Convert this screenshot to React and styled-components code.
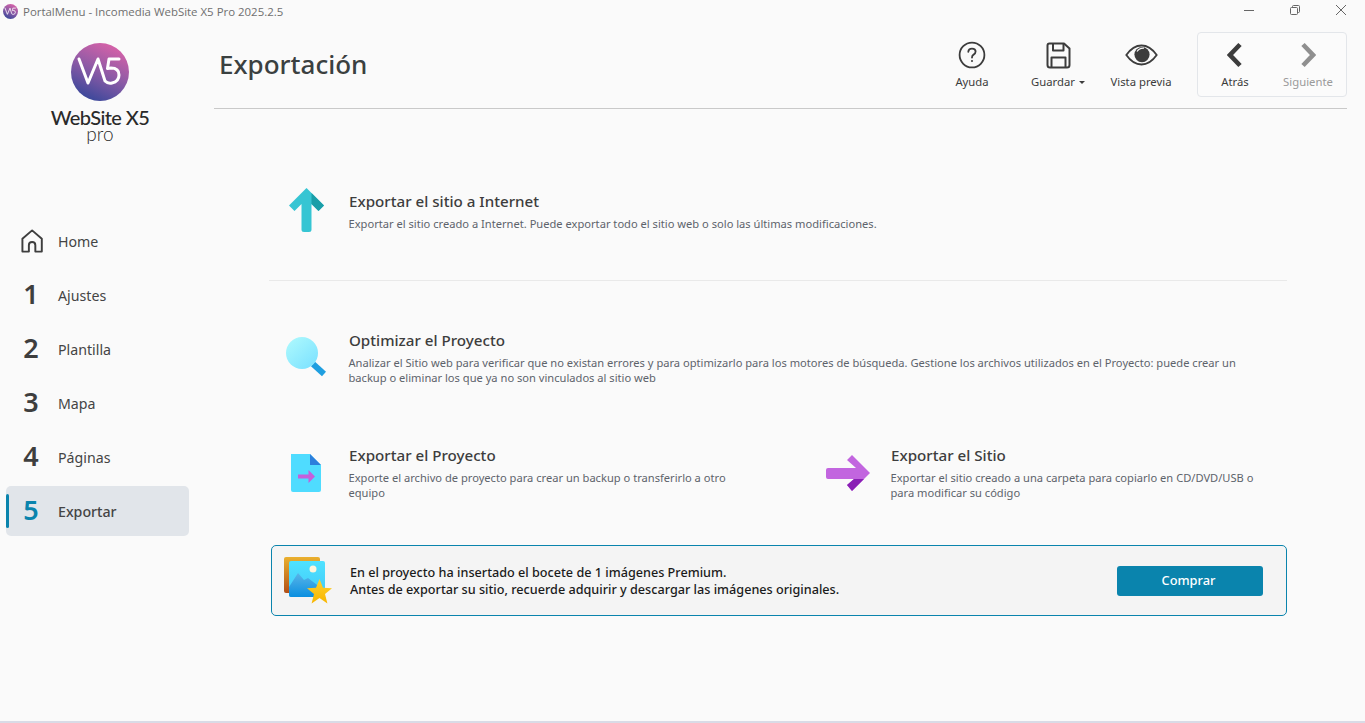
import React from "react"
import styled, { createGlobalStyle } from "styled-components"

const Global = createGlobalStyle`
  html, body {
    margin: 0;
    padding: 0;
    height: 100%;
    overflow: hidden;
    background: #fafafa;
  }
  * {
    box-sizing: border-box;
  }
`

const Window = styled.div`
  background: #fafafa;
  border-bottom: 2px solid #d9dbe6;
  color: #3c3c3c;
  display: flex;
  flex-direction: column;
  font-family: "Noto Sans", "Open Sans", sans-serif;
  height: 723px;
  width: 1365px;
`

const TitleBar = styled.div`
  align-items: center;
  display: flex;
  flex: none;
  height: 24px;
  padding: 0 0 2px 3px;
`

const TitleText = styled.span`
  color: #6f6f6f;
  font-family: "Open Sans", sans-serif;
  font-size: 11.45px;
  margin-left: 5px;
`

const WindowButtons = styled.div`
  align-items: center;
  display: flex;
  gap: 34px;
  margin-left: auto;
  margin-right: 18px;
  margin-top: -2px;
`

const Body = styled.div`
  display: flex;
  flex: 1;
  min-height: 0;
`

const Sidebar = styled.aside`
  display: flex;
  flex: none;
  flex-direction: column;
  padding: 19px 0 0 6px;
  width: 214px;
`

const Brand = styled.div`
  align-items: center;
  display: flex;
  flex-direction: column;
  margin-bottom: 74px;
  width: 188px;
`

const BrandName = styled.div`
  color: #2a2a2a;
  font-family: "Lato", sans-serif;
  font-size: 20px;
  font-weight: 500;
  letter-spacing: -0.6px;
  line-height: 18px;
  margin-top: 7px;
  white-space: nowrap;
`

const BrandPro = styled.div`
  color: #2a2a2a;
  font-family: "Lato", sans-serif;
  font-size: 19px;
  font-weight: 300;
  line-height: 16px;
`

const Nav = styled.nav`
  display: flex;
  flex-direction: column;
  gap: 4px;
  width: 183px;
`

const NavItem = styled.div`
  align-items: center;
  background: ${p => (p.$active ? "#e1e5ea" : "transparent")};
  border-radius: 5px;
  display: flex;
  height: 50px;
  position: relative;

  ${p =>
    p.$active &&
    `&::before {
      background: #0a84ad;
      border-radius: 2px;
      bottom: 8px;
      content: "";
      left: 0;
      position: absolute;
      top: 8px;
      width: 3px;
    }`}
`

const NavMark = styled.div`
  align-items: center;
  color: ${p => (p.$active ? "#0a84ad" : "#3e3e3e")};
  display: flex;
  flex: none;
  font-size: 27px;
  font-weight: 600;
  justify-content: center;
  margin-left: 5px;
  padding-bottom: ${p => (p.$icon ? 0 : 3)}px;
  width: 40px;
`

const NavLabel = styled.span`
  color: #444;
  font-size: 14.2px;
  font-weight: ${p => (p.$active ? 500 : 400)};
  margin-left: 7px;
`

const Main = styled.main`
  display: flex;
  flex: 1;
  flex-direction: column;
  min-width: 0;
`

const Header = styled.header`
  align-items: flex-start;
  border-bottom: 1px solid #c9c9c9;
  display: flex;
  flex: none;
  height: 85px;
  margin-right: 18px;
  padding-top: 8px;
`

const PageTitle = styled.h1`
  color: #3a4040;
  font-size: 26px;
  font-weight: 500;
  line-height: 50px;
  margin: 7px 0 0 5px;
`

const Tools = styled.div`
  display: flex;
  margin-left: auto;
`

const Tool = styled.div`
  align-items: center;
  color: ${p => (p.$muted ? "#9a9a9a" : "#3c3c3c")};
  display: flex;
  flex-direction: column;
  flex: none;
  font-size: 11.3px;
  height: 65px;
  padding-top: ${p => (p.$paged ? 7 : 8)}px;
  width: ${p => p.$w}px;
`

const ToolIcon = styled.div`
  align-items: center;
  display: flex;
  height: 30px;
  justify-content: center;
  margin-bottom: 4px;
`

const Caret = styled.span`
  border-left: 3px solid transparent;
  border-right: 3px solid transparent;
  border-top: 3px solid #3c3c3c;
  display: inline-block;
  margin-left: 4px;
  vertical-align: middle;
`

const Pager = styled.div`
  background: #fbfbfb;
  border: 1px solid #e3e6ea;
  border-radius: 4px;
  display: flex;
  height: 65px;
  margin-left: 9px;
  width: 150px;
`

const Content = styled.div`
  display: flex;
  flex: 1;
  flex-direction: column;
  padding: 0 78px 0 55px;
`

const FirstRow = styled.section`
  border-bottom: 1px solid #e9e9e9;
  display: flex;
  height: 172px;
  padding: 82px 0 0 0;
`

const Row = styled.section`
  display: flex;
  height: ${p => p.$h}px;
  padding-top: ${p => p.$top}px;
`

const Entry = styled.div`
  display: flex;
  flex: ${p => (p.$half ? "none" : "1")};
  width: ${p => (p.$half ? "542px" : "auto")};
`

const EntryIcon = styled.div`
  display: flex;
  flex: none;
  justify-content: center;
  margin-right: 6px;
  margin-top: ${p => p.$top || 0}px;
  width: 74px;
`

const EntryText = styled.div`
  max-width: ${p => p.$max || "none"};
`

const EntryTitle = styled.h2`
  color: #3d3d3d;
  font-size: 15.15px;
  font-weight: 500;
  line-height: 20px;
  margin: 0 0 4.5px 0;
`

const EntryDesc = styled.p`
  color: #5d636b;
  font-size: 11.13px;
  line-height: 15.5px;
  margin: 0 0 0 -0.5px;
`

const Banner = styled.section`
  align-items: center;
  background: #f4f4f4;
  border: 1px solid #0a84ad;
  border-radius: 5px;
  display: flex;
  height: 71px;
  margin-left: 2px;
  padding: 0 23px 0 12px;
`

const BannerText = styled.p`
  color: #1b1b1b;
  font-size: 12.65px;
  font-weight: 500;
  line-height: 17px;
  margin: 0 0 0 18px;
`

const BuyButton = styled.button`
  background: #0a84ad;
  border: none;
  border-radius: 3px;
  color: #fff;
  font-family: inherit;
  font-size: 12.8px;
  font-weight: 500;
  height: 30px;
  margin-left: auto;
  padding: 0 3px 2px 0;
  width: 146px;
`

const LogoMark = ({ size, id }) => (
  <svg width={size} height={size} viewBox="0 0 58 58">
    <defs>
      <linearGradient id={id} x1="0.75" y1="0" x2="0.3" y2="1">
        <stop offset="0" stopColor="#dc62a8" />
        <stop offset="0.5" stopColor="#8e5ba6" />
        <stop offset="1" stopColor="#37479a" />
      </linearGradient>
    </defs>
    <circle cx="29" cy="29" r="29" fill={`url(#${id})`} />
    <path
      d="M8 16 L17 40 L27 16 L34 38 Q37 41 41 40 Q48 38.5 48 32 Q48 25 40 25 L36.5 25.5 L38 16 L48 16"
      fill="none"
      stroke="#fff"
      strokeWidth="3"
      strokeLinecap="round"
      strokeLinejoin="round"
    />
  </svg>
)

const HomeIcon = () => (
  <svg width="24" height="24" viewBox="-2.2 0 26 26" fill="none" stroke="#3e3e3e" strokeWidth="2.1" strokeLinejoin="round">
    <path d="M1.5 24.5 V10.5 L12 1.5 L22.5 10.5 V24.5 H15.5 V17.5 Q15.5 14 12 14 Q8.5 14 8.5 17.5 V24.5 Z" />
  </svg>
)

const HelpIcon = () => (
  <svg width="28" height="28" viewBox="0 0 28 28" fill="none" stroke="#3c3c3c" strokeWidth="1.8">
    <circle cx="14" cy="14" r="12.4" />
    <path d="M10.3 10.8 Q10.5 7.6 14 7.6 Q17.6 7.6 17.6 10.6 Q17.6 12.5 15.6 13.6 Q14 14.5 14 16.6" strokeLinecap="round" />
    <circle cx="14" cy="20" r="0.7" fill="#3c3c3c" strokeWidth="0.8" />
  </svg>
)

const SaveIcon = () => (
  <svg width="25" height="27" viewBox="0 0 25 27" fill="none" stroke="#3c3c3c" strokeWidth="2" strokeLinejoin="round">
    <path d="M3.5 1.5 H18 L23.5 6.5 V23 Q23.5 25.5 21 25.5 H4 Q1.5 25.5 1.5 23 V3.5 Q1.5 1.5 3.5 1.5 Z" />
    <path d="M7 1.5 V8.5 H17.5 V1.5" />
    <path d="M5.5 25.5 V15.5 H19.5 V25.5" />
  </svg>
)

const EyeIcon = () => (
  <svg width="33" height="22" viewBox="0 0 33 22">
    <path d="M1.3 11 Q8 1.5 16.5 1.5 Q25 1.5 31.7 11 Q25 20.5 16.5 20.5 Q8 20.5 1.3 11 Z" fill="none" stroke="#3c3c3c" strokeWidth="1.8" />
    <circle cx="17" cy="10.6" r="7.6" fill="#3c3c3c" />
    <path d="M12 7.5 Q14.5 3.8 19 4.2" fill="none" stroke="#fafafa" strokeWidth="1.2" />
  </svg>
)

const Chevron = ({ color, flip }) => (
  <svg width="16" height="26" viewBox="0 0 16 26">
    <path d={flip ? "M3 2.5 L13 13 L3 23.5" : "M13 2.5 L3 13 L13 23.5"} fill="none" stroke={color} strokeWidth="4.6" />
  </svg>
)

const UploadIcon = () => (
  <svg width="35" height="44" viewBox="0 0 35 44">
    <path d="M17.5 0 L35 17.5 L29.5 23 L22.5 16 V41.5 Q22.5 44 20 44 H15 Q12.5 44 12.5 41.5 V16 L5.5 23 L0 17.5 Z" fill="#36c5d3" />
    <path d="M22.5 5 L35 17.5 L29.5 23 L22.5 16 Z" fill="#1a9ea8" />
  </svg>
)

const SearchIcon = () => (
  <svg width="40" height="40" viewBox="0 0 40 40">
    <defs>
      <linearGradient id="lens" x1="0.15" y1="0.1" x2="0.85" y2="0.9">
        <stop offset="0" stopColor="#a9f7fd" />
        <stop offset="1" stopColor="#7fe3ff" />
      </linearGradient>
    </defs>
    <path d="M27 27 L38 37" stroke="#1f9fe0" strokeWidth="6" />
    <circle cx="16" cy="16" r="16" fill="url(#lens)" />
  </svg>
)

const FileIcon = () => (
  <svg width="30" height="38" viewBox="0 0 30 38">
    <path d="M0 0 H19 L30 11 V36 Q30 38 28 38 H2 Q0 38 0 36 Z" fill="#4fdcff" />
    <path d="M19 0 L30 11 H19 Z" fill="#2c7fdc" />
    <path d="M7 20.5 H17.5 V16 L24 22.5 L17.5 29 V24.5 H7 Z" fill="#c45fdc" />
  </svg>
)

const ArrowIcon = () => (
  <svg width="44" height="36" viewBox="0 0 44 36">
    <path d="M2 13 H30 L21 5 L26 0 L44 18 L26 36 L21 30 L28 24 H2 Q0 24 0 22 V15 Q0 13 2 13 Z" fill="#c265df" />
    <path d="M28 24 L21 30 L26 36 L38 24 Z" fill="#8a1fb5" />
  </svg>
)

const PhotoIcon = () => (
  <svg width="48" height="48" viewBox="0 0 48 48">
    <defs>
      <linearGradient id="back" x1="0" y1="0" x2="0" y2="1">
        <stop offset="0" stopColor="#eab02e" />
        <stop offset="1" stopColor="#b14f18" />
      </linearGradient>
      <linearGradient id="front" x1="0" y1="0" x2="0" y2="1">
        <stop offset="0" stopColor="#4fe2ff" />
        <stop offset="1" stopColor="#41c8f8" />
      </linearGradient>
      <linearGradient id="hill" x1="0" y1="0" x2="0" y2="1">
        <stop offset="0" stopColor="#5ab4e8" />
        <stop offset="1" stopColor="#0a8fe0" />
      </linearGradient>
      <linearGradient id="star" x1="0" y1="0" x2="0" y2="1">
        <stop offset="0" stopColor="#ffd22e" />
        <stop offset="1" stopColor="#f7b500" />
      </linearGradient>
    </defs>
    <rect width="36" height="36" rx="2" fill="url(#back)" />
    <rect x="5" y="4" width="36" height="36" rx="2" fill="url(#front)" />
    <circle cx="29" cy="12" r="3.5" fill="#fdf5dc" />
    <path d="M5 30 L14 16 L20 23 L24 21 L41 34 V38 Q41 40 39 40 H7 Q5 40 5 38 Z" fill="url(#hill)" />
    <path d="M35.5 22 L39 30.8 L48 31.2 L41 37 L43.4 46.5 L35.5 41 L27.6 46.5 L30 37 L23 31.2 L32 30.8 Z" fill="url(#star)" />
  </svg>
)

const steps = ["1", "2", "3", "4"]
const stepLabels = ["Ajustes", "Plantilla", "Mapa", "Páginas"]

const App = () => (
  <Window>
    <Global />
    <TitleBar>
      <LogoMark size={15} id="logoSmall" />
      <TitleText>PortalMenu - Incomedia WebSite X5 Pro 2025.2.5</TitleText>
      <WindowButtons>
        <svg width="12" height="10" viewBox="0 0 12 10">
          <path d="M1 5.5 H11" stroke="#666" strokeWidth="1" />
        </svg>
        <svg width="12" height="12" viewBox="0 0 12 12" fill="none" stroke="#666">
          <rect x="1.5" y="3.5" width="7" height="7" rx="1" />
          <path d="M3.5 3.5 V2.5 Q3.5 1.5 4.5 1.5 H9.5 Q10.5 1.5 10.5 2.5 V7.5 Q10.5 8.5 9.5 8.5 H8.5" />
        </svg>
        <svg width="12" height="12" viewBox="0 0 12 12">
          <path d="M1 1 L11 11 M11 1 L1 11" stroke="#666" strokeWidth="1" />
        </svg>
      </WindowButtons>
    </TitleBar>
    <Body>
      <Sidebar>
        <Brand>
          <LogoMark size={58} id="logoBig" />
          <BrandName>WebSite X5</BrandName>
          <BrandPro>pro</BrandPro>
        </Brand>
        <Nav>
          <NavItem>
            <NavMark $icon>
              <HomeIcon />
            </NavMark>
            <NavLabel>Home</NavLabel>
          </NavItem>
          {steps.map((step, i) => (
            <NavItem key={step}>
              <NavMark>{step}</NavMark>
              <NavLabel>{stepLabels[i]}</NavLabel>
            </NavItem>
          ))}
          <NavItem $active>
            <NavMark $active>5</NavMark>
            <NavLabel $active>Exportar</NavLabel>
          </NavItem>
        </Nav>
      </Sidebar>
      <Main>
        <Header>
          <PageTitle>Exportación</PageTitle>
          <Tools>
            <Tool $w={100}>
              <ToolIcon>
                <HelpIcon />
              </ToolIcon>
              Ayuda
            </Tool>
            <Tool $w={72}>
              <ToolIcon>
                <SaveIcon />
              </ToolIcon>
              <span>
                Guardar
                <Caret />
              </span>
            </Tool>
            <Tool $w={94}>
              <ToolIcon>
                <EyeIcon />
              </ToolIcon>
              Vista previa
            </Tool>
            <Pager>
              <Tool $w={74} $paged>
                <ToolIcon>
                  <Chevron color="#3c3c3c" />
                </ToolIcon>
                Atrás
              </Tool>
              <Tool $w={72} $paged $muted>
                <ToolIcon>
                  <Chevron color="#8f8f8f" flip />
                </ToolIcon>
                Siguiente
              </Tool>
            </Pager>
          </Tools>
        </Header>
        <Content>
          <FirstRow>
            <Entry>
              <EntryIcon $top={-3}>
                <UploadIcon />
              </EntryIcon>
              <EntryText>
                <EntryTitle>Exportar el sitio a Internet</EntryTitle>
                <EntryDesc>
                  Exportar el sitio creado a Internet. Puede exportar todo el sitio web o solo las últimas modificaciones.
                </EntryDesc>
              </EntryText>
            </Entry>
          </FirstRow>
          <Row $h={119} $top={49}>
            <Entry>
              <EntryIcon $top={7}>
                <SearchIcon />
              </EntryIcon>
              <EntryText $max="900px">
                <EntryTitle>Optimizar el Proyecto</EntryTitle>
                <EntryDesc>
                  Analizar el Sitio web para verificar que no existan errores y para optimizarlo para los motores de búsqueda. Gestione los archivos utilizados en el Proyecto: puede crear un backup o eliminar los que ya no son vinculados al sitio web
                </EntryDesc>
              </EntryText>
            </Entry>
          </Row>
          <Row $h={145} $top={45}>
            <Entry $half>
              <EntryIcon $top={9}>
                <FileIcon />
              </EntryIcon>
              <EntryText $max="390px">
                <EntryTitle>Exportar el Proyecto</EntryTitle>
                <EntryDesc>
                  Exporte el archivo de proyecto para crear un backup o transferirlo a otro equipo
                </EntryDesc>
              </EntryText>
            </Entry>
            <Entry $half>
              <EntryIcon $top={10}>
                <ArrowIcon />
              </EntryIcon>
              <EntryText $max="380px">
                <EntryTitle>Exportar el Sitio</EntryTitle>
                <EntryDesc>
                  Exportar el sitio creado a una carpeta para copiarlo en CD/DVD/USB o para modificar su código
                </EntryDesc>
              </EntryText>
            </Entry>
          </Row>
          <Banner>
            <PhotoIcon />
            <BannerText>
              En el proyecto ha insertado el bocete de 1 imágenes Premium.
              <br />
              Antes de exportar su sitio, recuerde adquirir y descargar las imágenes originales.
            </BannerText>
            <BuyButton>Comprar</BuyButton>
          </Banner>
        </Content>
      </Main>
    </Body>
  </Window>
)

export default App
